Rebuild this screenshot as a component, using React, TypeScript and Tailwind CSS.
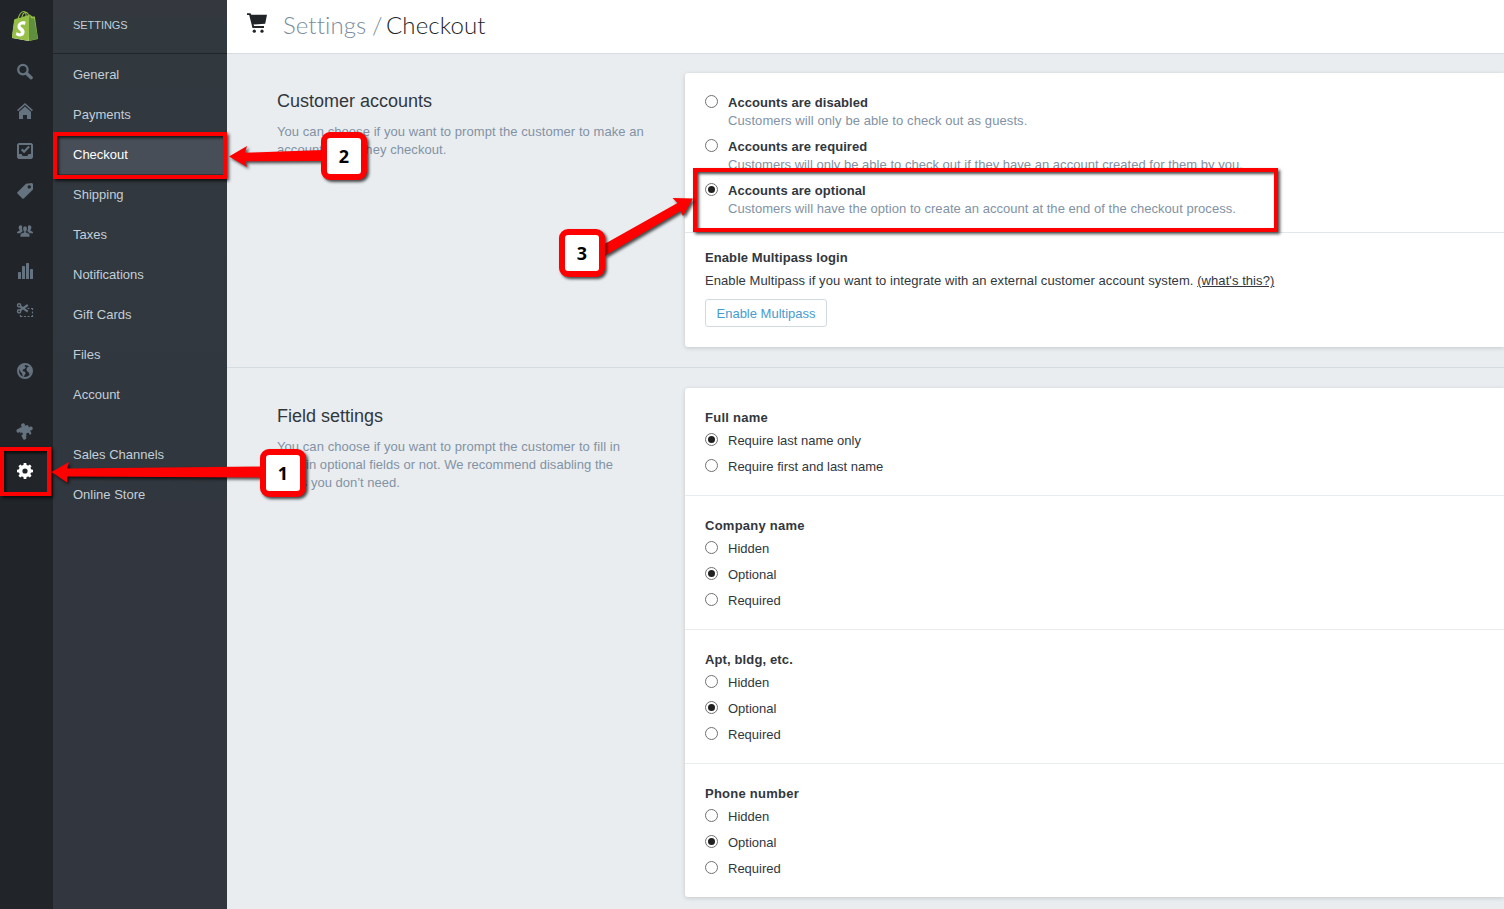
import React from "react";
import { SiShopify } from "react-icons/si";

type Option = { label: string; checked?: boolean };

const navItems = ["General", "Payments", "Checkout", "Shipping", "Taxes", "Notifications", "Gift Cards", "Files", "Account"];

const fields: { title: string; options: Option[] }[] = [
  { title: "Full name", options: [{ label: "Require last name only", checked: true }, { label: "Require first and last name" }] },
  { title: "Company name", options: [{ label: "Hidden" }, { label: "Optional", checked: true }, { label: "Required" }] },
  { title: "Apt, bldg, etc.", options: [{ label: "Hidden" }, { label: "Optional", checked: true }, { label: "Required" }] },
  { title: "Phone number", options: [{ label: "Hidden" }, { label: "Optional", checked: true }, { label: "Required" }] },
];

const gearTeeth = [0, 45, 90, 135, 180, 225, 270, 315];

function Radio({ checked }: { checked?: boolean }) {
  return (
    <svg className="mt-px h-[13px] w-[13px] shrink-0" viewBox="0 0 13 13">
      <circle cx="6.5" cy="6.5" r="6" fill="#fff" stroke="#707070" />
      {checked && <circle cx="6.5" cy="6.5" r="3.5" fill="#212121" />}
    </svg>
  );
}

function RailIcon({ active, children }: { active?: boolean; children: React.ReactNode }) {
  return (
    <div className={active ? "flex h-10 w-[50px] items-center justify-center text-white" : "flex h-10 w-[50px] items-center justify-center text-[#65727f]"}>
      <svg className="h-4 w-4 overflow-visible" viewBox="0 0 16 16" fill="currentColor">
        {children}
      </svg>
    </div>
  );
}

function Rail() {
  return (
    <aside className="flex w-[53px] shrink-0 flex-col bg-[#212529]">
      <div className="flex h-[51px] w-[50px] items-center justify-center">
        <svg className="h-[30px] w-[26px]" viewBox="0 0 26 30">
          <path d="M2.5 9 17 6v24L0 27z" fill="#fff" />
          <SiShopify x={-2} y={0} size={30} color="#95bf47" />
          <path d="m17.3 5.4 1.8 1.8 3 .3L26 27.5 17 30z" fill="#5e8e3e" />
        </svg>
      </div>
      <RailIcon>
        <circle cx="5.9" cy="6.6" r="4.700" fill="none" stroke="currentColor" strokeWidth="2.3" />
        <path d="m9.700 10.400 4.500 4.300" stroke="currentColor" strokeWidth="3.4" strokeLinecap="round" />
      </RailIcon>
      <RailIcon>
        <path d="M.6 7.6 8 1l7.400 6.600" fill="none" stroke="currentColor" strokeWidth="1.600" />
        <path d="m8 3.600 6 5.200V16h-4v-4H6v4H2V8.800z" />
      </RailIcon>
      <RailIcon>
        <path fillRule="evenodd" d="M1.500 0h13L16 1.500v13L14.500 16h-13L0 14.500v-13zM2 2v9h2.500l1.200 2h4.600l1.200-2H14V2z" />
        <path d="m4.700 6.400 2.400 2.400 5-5.200" fill="none" stroke="currentColor" strokeWidth="2.200" />
      </RailIcon>
      <RailIcon>
        <path fillRule="evenodd" d="M9 .8 15 0l1 1v5.500L6.800 15.500q-.7.7-1.400 0L.4 10.600q-.6-.7 0-1.400zM12.200 2.200a1.700 1.700 0 1 0 .1 0z" />
      </RailIcon>
      <RailIcon>
        <path d="M1.600 4.200a1.900 2.200 0 0 1 3.600-.8q-.8 2.600.6 4.600l-2.500 2.200H0V9.200q.3-1 2.500-1.500v-.9Q1.600 6 1.600 4.200zM14.400 4.200a1.900 2.200 0 0 0-3.600-.8q.8 2.600-.6 4.600l2.500 2.200H16V9.200q-.3-1-2.500-1.500v-.9q.9-.8.9-2.600z" />
        <path d="M5.800 5.400a2.200 2.500 0 0 1 4.400 0q0 2-1.100 3v1.100q3.500.6 3.700 2.300V14H3.200v-2.200q.2-1.700 3.700-2.300V8.400q-1.100-1-1.100-3z" stroke="#212529" strokeWidth=".5" />
      </RailIcon>
      <RailIcon>
        <rect x="1" y="9" width="3" height="7" rx=".6" />
        <rect x="5" y="3" width="3" height="13" rx=".6" />
        <rect x="9" y="0" width="3" height="16" rx=".6" />
        <rect x="13" y="6" width="3" height="10" rx=".6" />
      </RailIcon>
      <RailIcon>
        <g fill="none" stroke="currentColor">
          <circle cx="2.100" cy="2.300" r="1.600" strokeWidth="1.500" />
          <circle cx="2.100" cy="8.300" r="1.600" strokeWidth="1.500" />
          <path d="m3.300 3.400 7.500 5.200M3.300 7.200l7.500-5.200" strokeWidth="2.200" />
          <path d="M10.500 5.500h2M14 5.500h1.500V7M15.500 8.500v2M15.500 12v1.500H14M12.500 13.500h-2M9 13.500H7M5.500 13.500h-2V12" strokeWidth="1.200" />
        </g>
      </RailIcon>
      <div className="h-5" />
      <RailIcon>
        <circle cx="8" cy="8" r="7" fill="none" stroke="currentColor" strokeWidth="2" />
        <path d="M2 5.500 4.500 2.500 8 1.500 7.600 3.200 9 4.200 7.500 6 6 6.400 5.500 8l2.300.8 1 1.400L7.500 12l-.6 2.200-1.400-1.700L5 10.200 3.300 8.500zM10 4.500l3-1.300 1.800 3.300-.8 3-1.500 2.200-1-2.700L10 8.200 9.500 6.300z" />
      </RailIcon>
      <div className="h-5" />
      <RailIcon>
        <g transform="rotate(-22 8 8)">
          <rect x="3" y="3.200" width="10" height="10" rx=".8" />
          <circle cx="8.300" cy="2" r="2" />
          <circle cx="14.300" cy="7.800" r="2" />
          <circle cx="1.900" cy="5.300" r="1.900" />
          <circle cx="5" cy="14" r="1.900" />
          <circle cx="9.300" cy="12.400" r="1.700" fill="#212529" />
          <circle cx="3.700" cy="9.400" r="1.300" fill="#212529" />
        </g>
      </RailIcon>
      <RailIcon active>
        <circle cx="8" cy="8" r="4.400" fill="none" stroke="currentColor" strokeWidth="3.600" />
        {gearTeeth.map((a) => (
          <path key={a} d="M6.300 3 6.700 0h2.600l.4 3z" transform={`rotate(${a} 8 8)`} />
        ))}
      </RailIcon>
    </aside>
  );
}

function Sidebar() {
  return (
    <nav className="w-[174px] shrink-0 bg-[linear-gradient(#35373f_0,#35373f_17px,#31383e_18px,#31373e_500px,#32363e_504px,#32363e_100%)] text-[13px] text-[#c3cfd8]">
      <div className="flex h-[54px] items-center border-b border-[#212529] pb-[3px] pl-5 text-[11px] tracking-[-0.05px]">SETTINGS</div>
      {navItems.map((item) => (
        <div key={item} className={item === "Checkout" ? "flex h-10 items-center bg-[#484e57] pl-5 pt-0.5 text-white" : "flex h-10 items-center pl-5 pt-0.5"}>
          {item}
        </div>
      ))}
      <div className="h-5" />
      <div className="flex h-10 items-center pl-5 pt-0.5">Sales Channels</div>
      <div className="flex h-10 items-center pl-5 pt-0.5">Online Store</div>
    </nav>
  );
}

function AccountOption({ title, note, checked, noteClass }: { title: string; note: string; checked?: boolean; noteClass: string }) {
  return (
    <div className="flex gap-[10px]">
      <Radio checked={checked} />
      <div>
        <div className="font-bold tracking-[0.06px]">{title}</div>
        <div className={`text-[#8292a4] ${noteClass}`}>{note}</div>
      </div>
    </div>
  );
}

function Callout({ n, className }: { n: number; className: string }) {
  return (
    <div className={`absolute flex h-12 w-[46px] items-center justify-center rounded-[9px] border-[6px] border-[#fe0000] bg-white pb-px font-['Open_Sans',sans-serif] text-[18px] font-bold text-black shadow-[2px_2px_3px_rgba(0,0,0,0.7)] ${className}`}>
      {n}
    </div>
  );
}

function Annotations() {
  const frame = "absolute border-[#fe0000] shadow-[2px_2px_3px_rgba(0,0,0,0.7),inset_2px_2px_3px_rgba(0,0,0,0.7)]";
  return (
    <div className="pointer-events-none absolute inset-0">
      <div className={`${frame} left-0 top-[447px] h-[49px] w-[51px] border-4`} />
      <div className={`${frame} left-[53px] top-[132px] h-[47px] w-[174px] border-4`} />
      <div className={`${frame} left-[693px] top-[168px] h-[64px] w-[585px] border-4`} />
      <svg className="absolute inset-0 drop-shadow-[2px_2px_1.5px_rgba(0,0,0,0.7)]" width="1504" height="909" fill="#fe0000">
        <path d="M51.500 472 69 462l-2 6.500 195-2V477.500l-195-1 0 6z" />
        <path d="M229 156.500 247 146l-2 6.700 78-2.700V161l-78 .3 2 5.700z" />
        <path d="M693 198.500 672.500 198l5 5-73 41v12l76-45 2.500 5z" />
      </svg>
      <Callout n={1} className="left-[260px] top-[449px]" />
      <Callout n={2} className="left-[321px] top-[132px]" />
      <Callout n={3} className="left-[559px] top-[229px]" />
    </div>
  );
}

export default function App() {
  return (
    <div className="relative flex h-[909px] w-[1504px] overflow-hidden bg-[#e9edf0] font-['Liberation_Sans',Arial,sans-serif] text-[13px] leading-[18px] text-[#31373d]">
      <Rail />
      <Sidebar />
      <main className="min-w-0 flex-1">
        <header className="flex h-[54px] border-b border-[#d5dce1] bg-white pl-5 pt-[13px]">
          <svg className="h-5 w-5" viewBox="0 0 20 20" fill="#212529">
            <path d="M0 .2h3.500l.8 1.500H20l-1.800 9-11.700.8.6 1.500H17v2H5.500L2.200 2H0z" />
            <circle cx="7.300" cy="18.200" r="1.600" />
            <circle cx="15" cy="18.200" r="1.600" />
          </svg>
          <h1 className="ml-4 flex whitespace-nowrap font-['Lato',sans-serif] text-[24px] font-light leading-6 text-[#212529]">
            <span className="w-[89px] tracking-[0.08px] text-[#798c9c]">Settings</span>
            <span className="w-[14px] text-[#798c9c]">/</span>
            <span className="tracking-[0.12px]">Checkout</span>
          </h1>
        </header>

        <section className="flex h-[314px] border-b border-[#d5dce1] pl-[50px]">
          <div className="w-[408px] shrink-0 pt-[35px]">
            <h2 className="text-[18px] leading-6">Customer accounts</h2>
            <p className="mt-[10px] whitespace-nowrap tracking-[0.065px] text-[#8292a4]">
              You can choose if you want to prompt the customer to make an<br />account when they checkout.
            </p>
          </div>
          <div className="mt-[19px] h-[274px] flex-1 rounded-l-[3px] bg-white shadow-[0_1px_4px_rgba(0,0,0,0.16)]">
            <div className="flex h-[160px] flex-col gap-2 border-b border-[#e3e7ea] pl-5 pt-[21px]">
              <AccountOption noteClass="tracking-[0.09px]" title="Accounts are disabled" note="Customers will only be able to check out as guests." />
              <AccountOption noteClass="tracking-[0.02px]" title="Accounts are required" note="Customers will only be able to check out if they have an account created for them by you." />
              <AccountOption noteClass="tracking-[0.04px]" checked title="Accounts are optional" note="Customers will have the option to create an account at the end of the checkout process." />
            </div>
            <div className="pl-5 pt-4">
              <h3 className="font-bold tracking-[0.09px]">Enable Multipass login</h3>
              <p className="mt-[5px] tracking-[0.07px]">
                Enable Multipass if you want to integrate with an external customer account system. <a className="underline">(what's this?)</a>
              </p>
              <button className="mt-[9px] h-7 w-[122px] rounded-[3px] border border-[#d1dae1] pt-px text-[#479ccf]">Enable Multipass</button>
            </div>
          </div>
        </section>

        <section className="flex pl-[50px]">
          <div className="w-[408px] shrink-0 pt-9">
            <h2 className="text-[18px] leading-6">Field settings</h2>
            <p className="mt-[10px] whitespace-nowrap tracking-[0.065px] text-[#8292a4]">
              You can choose if you want to prompt the customer to fill in<br />
              <span className="tracking-[0.03px]">certain optional fields or not. We recommend disabling the</span>
              <br /><span className="tracking-normal">fields you don’t need.</span>
            </p>
          </div>
          <div className="mt-5 flex-1 divide-y divide-[#e9ecef] rounded-l-[3px] bg-white shadow-[0_1px_4px_rgba(0,0,0,0.16)]">
            {fields.map((f) => (
              <div key={f.title} className="pb-[19px] pl-5 pt-[21px]">
                <h3 className={f.title.startsWith("Apt") ? "mb-[5px] font-bold tracking-[0.13px]" : "mb-[5px] font-bold tracking-[0.25px]"}>{f.title}</h3>
                <div className="flex flex-col gap-2">
                  {f.options.map((o) => (
                    <div key={o.label} className="flex gap-[10px]">
                      <Radio checked={o.checked} />
                      {o.label}
                    </div>
                  ))}
                </div>
              </div>
            ))}
          </div>
        </section>
      </main>
      <Annotations />
    </div>
  );
}
